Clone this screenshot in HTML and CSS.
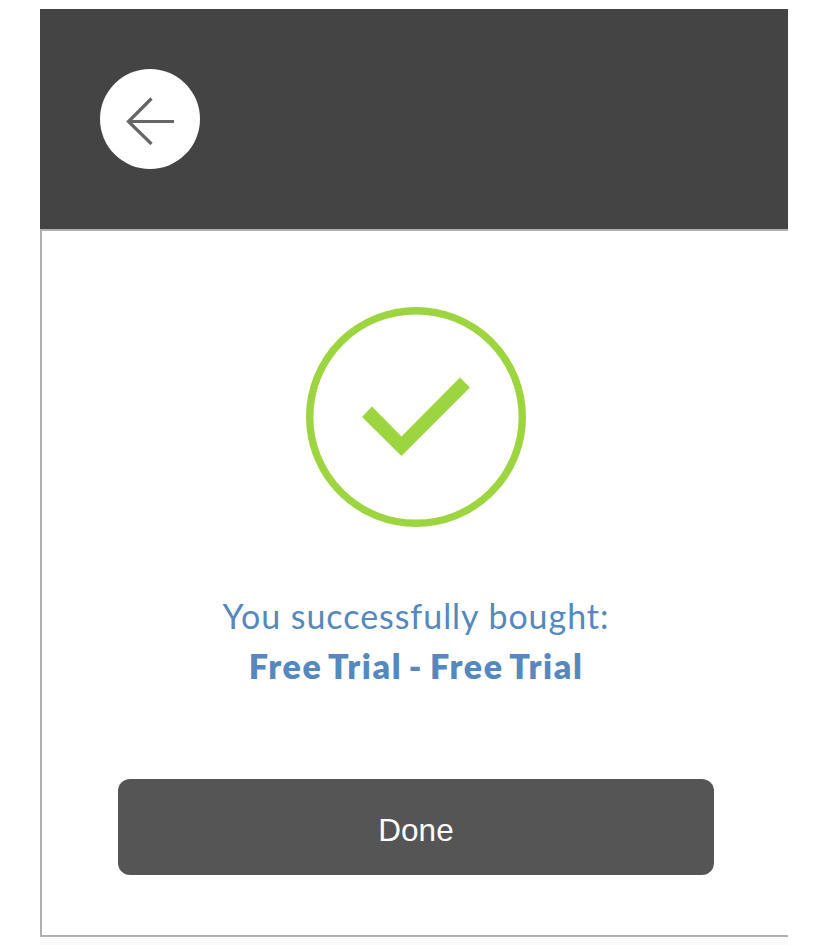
FILE: index.html
```html
<!doctype html>
<html lang="en">
<head>
<meta charset="utf-8">
<meta name="viewport" content="width=device-width, initial-scale=1.0">
<title>Purchase complete</title>
<link rel="stylesheet" href="styles.css">
</head>
<body>
<div class="page">
  <header class="header">
    <a class="back" href="#" aria-label="Back">
      <svg width="100" height="100" viewBox="0 0 100 100">
        <path d="M51.5 29.5L28.5 52.5L51.5 75M29 52.5H74" fill="none" stroke="#666" stroke-width="3.2"/>
      </svg>
    </a>
  </header>
  <main class="content">
    <svg class="success" width="220" height="220" viewBox="0 0 220 220">
      <circle cx="110" cy="110" r="106.3" fill="none" stroke="#9dd540" stroke-width="7.4"/>
      <path d="M56 110L66 99.5L95.5 129.5L154 70.5L164 80.5L95.5 149Z" fill="#9dd540"/>
    </svg>
    <div class="message">
      <p class="bought">You successfully bought:</p>
      <p class="product">Free Trial - Free Trial</p>
    </div>
    <button class="done" type="button">Done</button>
  </main>
</div>
</body>
</html>
```

FILE: styles.css
```css
* {
    box-sizing: border-box;
}
body {
    margin: 0;
    background: #fff;
    font-family: "Liberation Sans", Arial, sans-serif;
}
.page {
    width: 748px;
    height: 945px;
    margin: 0 auto;
    padding-top: 9px;
    background: linear-gradient(#fff 937px, #fafafa 937px);
}
.header {
    height: 220px;
    padding: 60px;
    background: #444;
}
.back {
    display: block;
    width: 100px;
    height: 100px;
    border-radius: 50%;
    background: #fff;
}
.back svg {
    display: block;
}
.content {
    display: flex;
    flex-direction: column;
    align-items: center;
    height: 708px;
    padding: 76px 74px 0 76px;
    border: 2px solid #b0b0b0;
    border-right: 0;
    background: #fff;
}
.success {
    flex: none;
}
.message {
    margin-top: 64px;
    color: #5688bd;
    font-family: Lato, "Open Sans", sans-serif;
    font-size: 34px;
    line-height: 50px;
    text-align: center;
    white-space: nowrap;
}
.message p {
    margin: 0;
}
.bought {
    letter-spacing: 0.95px;
}
.product {
    font-weight: 800;
    letter-spacing: 1.6px;
    word-spacing: -2.7px;
}
.done {
    width: 596px;
    height: 96px;
    margin-top: 88px;
    padding: 7px 0 0;
    border: 0;
    border-radius: 12px;
    background: #555;
    color: #fff;
    font-family: "Liberation Sans", Arial, sans-serif;
    font-size: 31.5px;
}
```
